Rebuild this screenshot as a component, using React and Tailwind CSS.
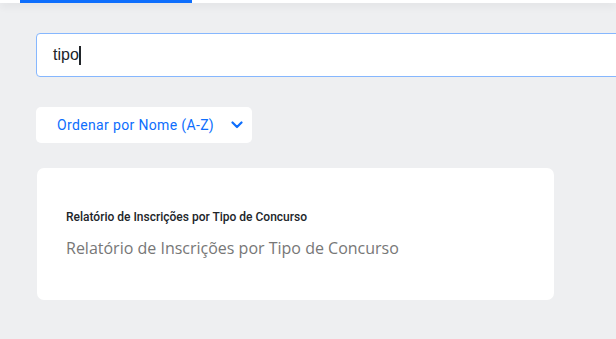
export default function App() {
  return (
    <div className="w-[616px] h-[339px] overflow-hidden bg-[#eeeff1] relative" style={{ fontFamily: "Roboto, 'Noto Sans', sans-serif" }}>
      <div className="h-[3px] bg-white shadow-[0_2px_8px_rgba(0,0,0,0.12)] relative z-10">
        <div className="ml-[20px] w-[172px] h-[3px] bg-[#0d6efd]" />
      </div>
      <div className="pt-[30px] pl-[36px]">
        <div className="w-[620px] h-[44px] bg-white border border-[#86b7fe] rounded-[4px] flex items-center pl-[16px]">
          <span className="text-[16px] text-[#212529]" style={{ fontFamily: "'Liberation Sans', Arial, sans-serif" }}>tipo</span>
          <span className="w-[1.5px] h-[19px] bg-[#212529] ml-[0.5px]" />
        </div>
        <div className="mt-[30px] w-[216px] h-[36px] bg-white rounded-[5px] flex items-center pl-[21px] pr-[8px]">
          <span className="text-[14px] tracking-[0.35px] text-[#0d6efd] flex-1">Ordenar por Nome (A-Z)</span>
          <svg width="12" height="8" viewBox="0 0 12 8" className="mr-[1px]">
            <path d="M1.5 1.5 L6 6 L10.5 1.5" fill="none" stroke="#0d6efd" strokeWidth="2.2" strokeLinecap="round" strokeLinejoin="round" />
          </svg>
        </div>
        <div className="mt-[25px] ml-[1px] w-[517px] h-[132px] bg-white rounded-[7px] pl-[29px] pt-[42px]">
          <div className="text-[12px] font-medium text-[#212529] leading-[14px]">Relatório de Inscrições por Tipo de Concurso</div>
          <div className="text-[16px] text-[#777777] mt-[14px] leading-[21px]" style={{ fontFamily: "'Open Sans', sans-serif" }}>Relatório de Inscrições por Tipo de Concurso</div>
        </div>
      </div>
    </div>
  );
}
